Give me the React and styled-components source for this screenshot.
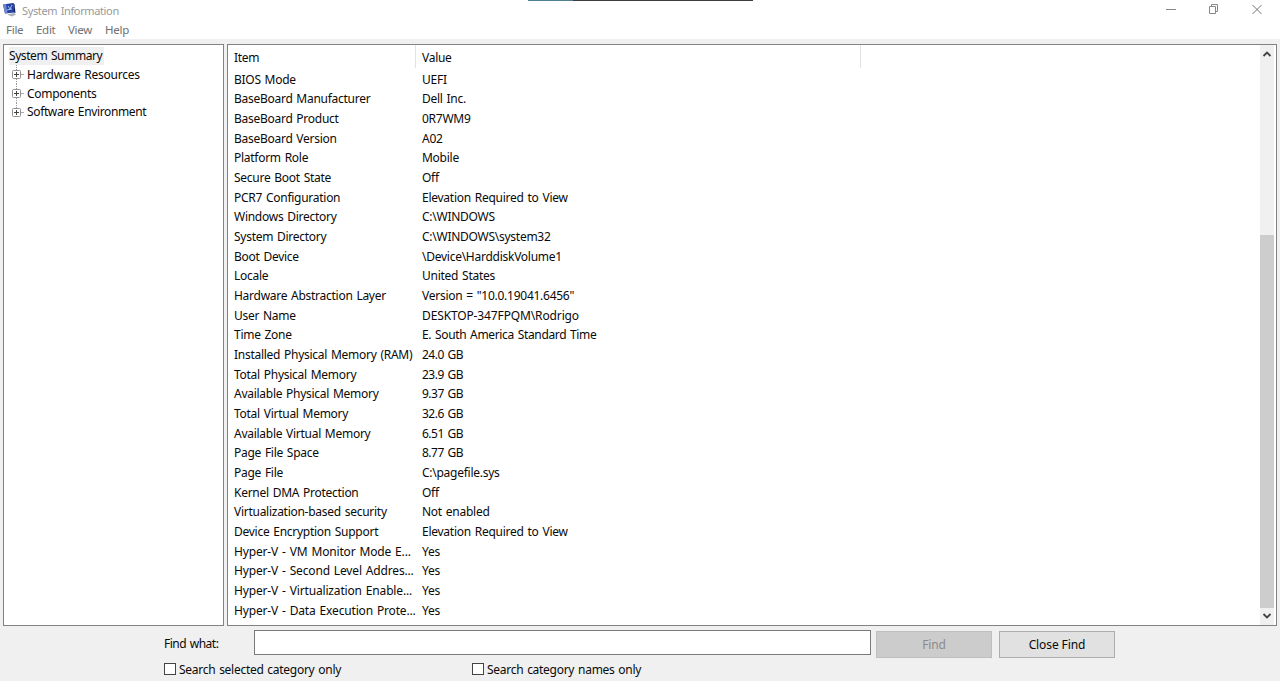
import * as React from 'react'
import styled, { createGlobalStyle } from 'styled-components'

const GlobalStyle = createGlobalStyle`
  * {
    box-sizing: border-box;
  }

  body {
    margin: 0;
    background: #f0f0f0;
    color: #0a0a0a;
    font-family: 'Noto Sans', 'Open Sans', sans-serif;
    font-size: 12px;
    letter-spacing: -0.28px;
    word-spacing: 1px;
    overflow: hidden;
  }
`

const Window = styled.div`
  width: 1280px;
  height: 681px;
  display: flex;
  flex-direction: column;
  position: relative;
`

const TopStrip = styled.div`
  position: absolute;
  top: 0;
  left: 528px;
  width: 225px;
  height: 1px;
  background: linear-gradient(to right, #4f7f92 45px, #3d3b40 45px);
`

const TitleBar = styled.header`
  height: 21px;
  display: flex;
  justify-content: space-between;
  background: #fff;
`

const Title = styled.div`
  display: flex;
  align-items: flex-start;
  gap: 4px;
  padding: 2px 0 0 2px;
  color: #999;
  font-size: 11px;
  line-height: 18px;
  letter-spacing: -0.37px;
`

const Controls = styled.div`
  display: flex;
  gap: 31px;
  padding: 4px 17px 0 0;
`

const Menu = styled.nav`
  height: 18px;
  display: flex;
  padding-left: 6px;
  background: #fff;
  color: #707070;
  font-size: 11.5px;
  line-height: 18px;
`

const MenuItem = styled.span`
  width: ${(props) => props.$width}px;
`

const Panes = styled.main`
  height: 582px;
  margin-top: 5px;
  padding: 0 3px;
  display: flex;
  gap: 3px;
`

const Pane = styled.section`
  width: ${(props) => props.$width}px;
  height: 582px;
  display: flex;
  background: #fff;
  border: 1px solid #828282;
`

const Tree = styled.div`
  padding: 2px 0 0 5px;
`

const TreeRoot = styled.div`
  width: 95px;
  height: 18px;
  background: #f0f0f0;
  line-height: 18px;
  letter-spacing: -0.42px;
  white-space: nowrap;
`

const TreeItem = styled.div`
  height: 18.8px;
  display: flex;
  align-items: center;
  padding-left: 2px;
  gap: 2px;
  white-space: nowrap;
  letter-spacing: ${(props) => props.$spacing}px;
`

const Table = styled.div`
  flex: 1;
`

const HeaderRow = styled.div`
  height: 24.6px;
  display: flex;
  line-height: 25px;
`

const HeaderCell = styled.div`
  width: ${(props) => props.$width}px;
  height: 23px;
  padding-left: 6px;
  border-right: 1px solid #e3e3e3;
`

const Row = styled.div`
  height: 19.685px;
  display: flex;
  line-height: 20px;
  white-space: nowrap;
`

const Cell = styled.div`
  width: ${(props) => props.$width}px;
  padding-left: 6px;
  letter-spacing: ${(props) => props.$spacing}px;
`

const Scrollbar = styled.div`
  width: 16px;
  display: flex;
  flex-direction: column;
  justify-content: space-between;
  align-items: center;
  background: #f0f0f0;
  border-right: 2px solid #fff;
`

const Thumb = styled.div`
  width: 14px;
  height: 373px;
  margin-top: 172px;
  background: #cdcdcd;
`

const Arrow = styled.svg`
  display: block;
  width: 14px;
  height: 17px;
  fill: none;
  stroke: #444;
  stroke-width: 1.8;
`

const FindBar = styled.footer`
  height: 55px;
  padding: 4px 0 0 164px;
`

const FindRow = styled.div`
  display: flex;
  align-items: flex-start;
`

const FindLabel = styled.label`
  width: 90px;
  line-height: 27px;
  letter-spacing: -0.5px;
`

const Input = styled.input`
  width: 617px;
  height: 25px;
  margin-right: 5px;
  padding: 0 4px;
  background: #fff;
  border: 1px solid #7a7a7a;
  border-radius: 0;
`

const Button = styled.button`
  width: 116px;
  height: 27px;
  margin: 1px 7px 0 0;
  padding: 0;
  background: ${(props) => (props.disabled ? '#cccccc' : '#e1e1e1')};
  border: 1px solid ${(props) => (props.disabled ? '#bfbfbf' : '#adadad')};
  color: ${(props) => (props.disabled ? '#8b8b8b' : '#0a0a0a')};
  font: inherit;
  letter-spacing: -0.1px;
`

const Options = styled.div`
  display: flex;
  margin-top: 2px;
`

const Option = styled.label`
  width: 308px;
  display: flex;
  align-items: center;
  gap: 3px;
  line-height: 20px;
`

const Box = styled.span`
  width: 12px;
  height: 12px;
  margin-top: -2px;
  background: #fff;
  border: 1px solid #444;
`

const rows = [
  ['BIOS Mode', 'UEFI'],
  ['BaseBoard Manufacturer', 'Dell Inc.'],
  ['BaseBoard Product', '0R7WM9'],
  ['BaseBoard Version', 'A02'],
  ['Platform Role', 'Mobile'],
  ['Secure Boot State', 'Off'],
  ['PCR7 Configuration', 'Elevation Required to View'],
  ['Windows Directory', 'C:\\WINDOWS'],
  ['System Directory', 'C:\\WINDOWS\\system32'],
  ['Boot Device', '\\Device\\HarddiskVolume1'],
  ['Locale', 'United States'],
  ['Hardware Abstraction Layer', 'Version = "10.0.19041.6456"'],
  ['User Name', 'DESKTOP-347FPQM\\Rodrigo'],
  ['Time Zone', 'E. South America Standard Time'],
  ['Installed Physical Memory (RAM)', '24.0 GB'],
  ['Total Physical Memory', '23.9 GB'],
  ['Available Physical Memory', '9.37 GB'],
  ['Total Virtual Memory', '32.6 GB'],
  ['Available Virtual Memory', '6.51 GB'],
  ['Page File Space', '8.77 GB'],
  ['Page File', 'C:\\pagefile.sys'],
  ['Kernel DMA Protection', 'Off'],
  ['Virtualization-based security', 'Not enabled'],
  ['Device Encryption Support', 'Elevation Required to View'],
  ['Hyper-V - VM Monitor Mode E...', 'Yes'],
  ['Hyper-V - Second Level Addres...', 'Yes'],
  ['Hyper-V - Virtualization Enable...', 'Yes'],
  ['Hyper-V - Data Execution Prote...', 'Yes'],
]

const itemSpacing = (item) => (item.startsWith('Hyper-V') ? -0.16 : -0.27)

const valueSpacing = (value) => {
  if (value.endsWith(' GB')) return -0.5
  if (value.startsWith('DESKTOP')) return -0.13
  if (value.startsWith('E. South')) return -0.34
  return -0.26
}

const AppIcon = () => (
  <svg width="16" height="16" viewBox="0 0 16 16">
    <path d="M1 2.500L11 1l1.500 9.500L3 11.500z" fill="#2541a5" />
    <path d="M1 2.500L4 2l1.500 9-2.500.5z" fill="#7187cf" />
    <path d="M6 4l2 3 2-4M5 8l5-1" stroke="#a9bdf5" fill="none" />
    <path d="M11 1l1.500 1 1 9-1.500-.5z" fill="#16255f" />
    <path d="M5 12.500l7-1.500 2 1.500-4 2z" fill="#aab0be" />
  </svg>
)

const Expander = ({ last }) => (
  <svg width="14" height="19" viewBox="0 0 14 19">
    <path
      d={last ? 'M5.500 0v5' : 'M5.500 0v5M5.500 14v5'}
      stroke="#999"
      strokeDasharray="1 1"
    />
    <path d="M10 9.500h3" stroke="#aaa" />
    <rect x="1.500" y="5.500" width="8" height="8" rx="1" fill="#fff" stroke="#919191" />
    <path d="M3 9.500h5M5.500 7v5" stroke="#444" />
  </svg>
)

const WindowControls = () => (
  <Controls>
    <svg width="12" height="12" stroke="#888">
      <path d="M1 5.500h10" />
    </svg>
    <svg width="12" height="12" fill="none" stroke="#888">
      <path d="M1.500 2.500h6v7h-6zM3.500 2.500v-2h6v7h-2" />
    </svg>
    <svg width="12" height="12" stroke="#777">
      <path d="M1.500 1l9 9M10.500 1l-9 9" />
    </svg>
  </Controls>
)

const App = () => (
  <>
    <GlobalStyle />
    <Window>
      <TopStrip />
      <TitleBar>
        <Title>
          <AppIcon />
          <span>System Information</span>
        </Title>
        <WindowControls />
      </TitleBar>
      <Menu>
        <MenuItem $width={30}>File</MenuItem>
        <MenuItem $width={32}>Edit</MenuItem>
        <MenuItem $width={37}>View</MenuItem>
        <MenuItem $width={30}>Help</MenuItem>
      </Menu>
      <Panes>
        <Pane $width={221}>
          <Tree>
            <TreeRoot>System Summary</TreeRoot>
            <TreeItem $spacing={-0.24}>
              <Expander />
              Hardware Resources
            </TreeItem>
            <TreeItem $spacing={-0.3}>
              <Expander />
              Components
            </TreeItem>
            <TreeItem $spacing={-0.36}>
              <Expander last />
              Software Environment
            </TreeItem>
          </Tree>
        </Pane>
        <Pane $width={1050}>
          <Table>
            <HeaderRow>
              <HeaderCell $width={188}>Item</HeaderCell>
              <HeaderCell $width={445}>Value</HeaderCell>
            </HeaderRow>
            {rows.map(([item, value]) => (
              <Row key={item}>
                <Cell $width={188} $spacing={itemSpacing(item)}>
                  {item}
                </Cell>
                <Cell $width={445} $spacing={valueSpacing(value)}>
                  {value}
                </Cell>
              </Row>
            ))}
          </Table>
          <Scrollbar>
            <Arrow>
              <path d="M3.500 11L7 7.500l3.500 3.500" />
            </Arrow>
            <Thumb />
            <Arrow>
              <path d="M3.500 6L7 9.500 10.500 6" />
            </Arrow>
          </Scrollbar>
        </Pane>
      </Panes>
      <FindBar>
        <FindRow>
          <FindLabel>Find what:</FindLabel>
          <Input />
          <Button disabled>Find</Button>
          <Button>Close Find</Button>
        </FindRow>
        <Options>
          <Option>
            <Box />
            Search selected category only
          </Option>
          <Option>
            <Box />
            Search category names only
          </Option>
        </Options>
      </FindBar>
    </Window>
  </>
)

export default App
